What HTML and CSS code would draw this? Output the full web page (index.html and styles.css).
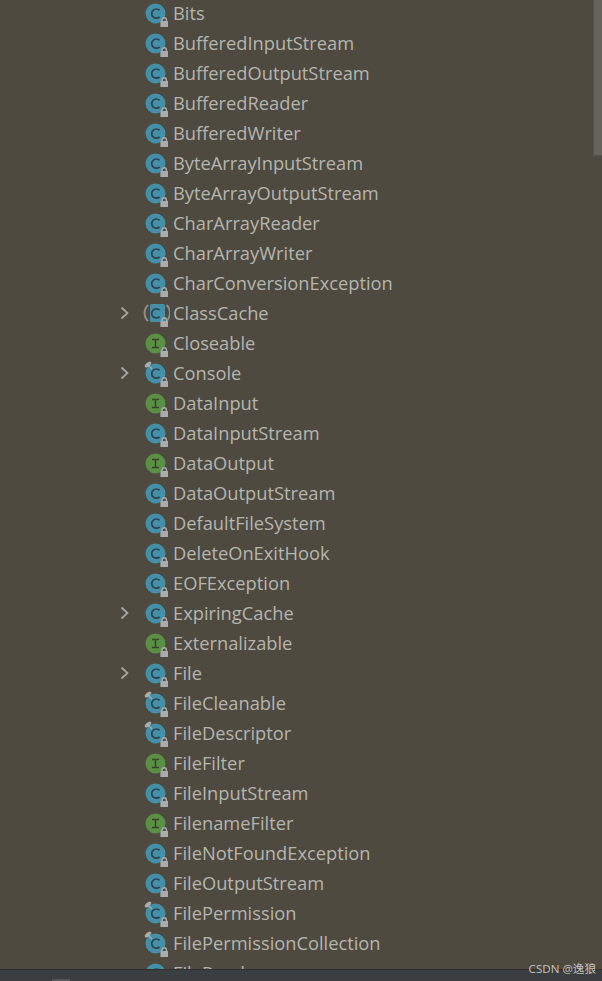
FILE: index.html
```html
<!DOCTYPE html>
<html lang="en">
<head>
<meta charset="utf-8">
<title>Project tree</title>
<link rel="stylesheet" href="styles.css">
</head>
<body>
<svg class="defs" width="0" height="0" aria-hidden="true">
  <symbol id="lock" viewBox="0 0 28 30">
    <path class="shackle" d="M20 23.5v-1.6a2.2 2.2 0 0 1 4.4 0v1.6"/>
    <rect class="lockbody" x="18.4" y="23" width="7.6" height="6"/>
  </symbol>
  <symbol id="c" viewBox="0 0 28 30">
    <circle class="blue" cx="13.5" cy="15.5" r="10"/>
    <path class="glyph" d="M17.6 12.4a4.6 4.6 0 1 0 0 6.4"/>
    <use href="#lock"/>
  </symbol>
  <symbol id="i" viewBox="0 0 28 30">
    <circle class="green" cx="13.5" cy="15.5" r="10"/>
    <path class="glyphi" d="M10 11.5h7M13.5 11.5v8M10 19.5h7"/>
    <use href="#lock"/>
  </symbol>
  <symbol id="p" viewBox="0 0 28 30">
    <circle class="blue" cx="13.5" cy="15.5" r="10"/>
    <path class="glyph" d="M17.6 12.4a4.6 4.6 0 1 0 0 6.4"/>
    <path class="pinline" d="M5 6l5 5"/>
    <ellipse class="pin" cx="6" cy="6.5" rx="3.8" ry="2" transform="rotate(-40 6 6.5)"/>
    <use href="#lock"/>
  </symbol>
  <symbol id="a" viewBox="0 0 28 30">
    <path class="paren" d="M6 7a11 11 0 0 0 0 16M24.5 7a11 11 0 0 1 0 16"/>
    <rect class="blue" x="8" y="6" width="15" height="18" rx="1.5"/>
    <path class="glyph" d="M17.6 12.2a4.6 4.6 0 1 0 0 6.4"/>
    <use href="#lock"/>
  </symbol>
  <symbol id="arrow" viewBox="0 0 12 14">
    <path class="chev" d="M2.5 1.5L8.5 7L2.5 12.5"/>
  </symbol>
</svg>
<div class="screen">
  <ul class="tree">
    <li class="row"><span class="gutter"></span><svg class="icon"><use href="#c"/></svg><span class="name">Bits</span></li>
    <li class="row"><span class="gutter"></span><svg class="icon"><use href="#c"/></svg><span class="name">BufferedInputStream</span></li>
    <li class="row"><span class="gutter"></span><svg class="icon"><use href="#c"/></svg><span class="name">BufferedOutputStream</span></li>
    <li class="row"><span class="gutter"></span><svg class="icon"><use href="#c"/></svg><span class="name">BufferedReader</span></li>
    <li class="row"><span class="gutter"></span><svg class="icon"><use href="#c"/></svg><span class="name">BufferedWriter</span></li>
    <li class="row"><span class="gutter"></span><svg class="icon"><use href="#c"/></svg><span class="name">ByteArrayInputStream</span></li>
    <li class="row"><span class="gutter"></span><svg class="icon"><use href="#c"/></svg><span class="name">ByteArrayOutputStream</span></li>
    <li class="row"><span class="gutter"></span><svg class="icon"><use href="#c"/></svg><span class="name">CharArrayReader</span></li>
    <li class="row"><span class="gutter"></span><svg class="icon"><use href="#c"/></svg><span class="name">CharArrayWriter</span></li>
    <li class="row"><span class="gutter"></span><svg class="icon"><use href="#c"/></svg><span class="name">CharConversionException</span></li>
    <li class="row"><span class="gutter"><svg class="chevron"><use href="#arrow"/></svg></span><svg class="icon"><use href="#a"/></svg><span class="name">ClassCache</span></li>
    <li class="row"><span class="gutter"></span><svg class="icon"><use href="#i"/></svg><span class="name">Closeable</span></li>
    <li class="row"><span class="gutter"><svg class="chevron"><use href="#arrow"/></svg></span><svg class="icon"><use href="#p"/></svg><span class="name">Console</span></li>
    <li class="row"><span class="gutter"></span><svg class="icon"><use href="#i"/></svg><span class="name">DataInput</span></li>
    <li class="row"><span class="gutter"></span><svg class="icon"><use href="#c"/></svg><span class="name">DataInputStream</span></li>
    <li class="row"><span class="gutter"></span><svg class="icon"><use href="#i"/></svg><span class="name">DataOutput</span></li>
    <li class="row"><span class="gutter"></span><svg class="icon"><use href="#c"/></svg><span class="name">DataOutputStream</span></li>
    <li class="row"><span class="gutter"></span><svg class="icon"><use href="#c"/></svg><span class="name">DefaultFileSystem</span></li>
    <li class="row"><span class="gutter"></span><svg class="icon"><use href="#c"/></svg><span class="name">DeleteOnExitHook</span></li>
    <li class="row"><span class="gutter"></span><svg class="icon"><use href="#c"/></svg><span class="name">EOFException</span></li>
    <li class="row"><span class="gutter"><svg class="chevron"><use href="#arrow"/></svg></span><svg class="icon"><use href="#c"/></svg><span class="name">ExpiringCache</span></li>
    <li class="row"><span class="gutter"></span><svg class="icon"><use href="#i"/></svg><span class="name">Externalizable</span></li>
    <li class="row"><span class="gutter"><svg class="chevron"><use href="#arrow"/></svg></span><svg class="icon"><use href="#c"/></svg><span class="name">File</span></li>
    <li class="row"><span class="gutter"></span><svg class="icon"><use href="#p"/></svg><span class="name">FileCleanable</span></li>
    <li class="row"><span class="gutter"></span><svg class="icon"><use href="#p"/></svg><span class="name">FileDescriptor</span></li>
    <li class="row"><span class="gutter"></span><svg class="icon"><use href="#i"/></svg><span class="name">FileFilter</span></li>
    <li class="row"><span class="gutter"></span><svg class="icon"><use href="#c"/></svg><span class="name">FileInputStream</span></li>
    <li class="row"><span class="gutter"></span><svg class="icon"><use href="#i"/></svg><span class="name">FilenameFilter</span></li>
    <li class="row"><span class="gutter"></span><svg class="icon"><use href="#c"/></svg><span class="name">FileNotFoundException</span></li>
    <li class="row"><span class="gutter"></span><svg class="icon"><use href="#c"/></svg><span class="name">FileOutputStream</span></li>
    <li class="row"><span class="gutter"></span><svg class="icon"><use href="#p"/></svg><span class="name">FilePermission</span></li>
    <li class="row"><span class="gutter"></span><svg class="icon"><use href="#p"/></svg><span class="name">FilePermissionCollection</span></li>
    <li class="row"><span class="gutter"></span><svg class="icon"><use href="#c"/></svg><span class="name">FileReader</span></li>
  </ul>
  <div class="scrollbar"></div>
  <footer class="status"><span class="tab"></span></footer>
  <div class="watermark">CSDN @逸狼</div>
</div>
</body>
</html>
```

FILE: styles.css
```css
html, body {
  margin: 0;
  padding: 0;
  height: 100%;
  overflow: hidden;
  background: #4e4a40;
}

.defs {
  display: block;
  height: 0;
}

.screen {
  position: relative;
  display: flex;
  flex-direction: column;
  height: 981px;
  overflow: hidden;
  font-family: "Open Sans", "Noto Sans CJK SC", sans-serif;
}

.tree {
  flex: 1;
  min-height: 0;
  margin: -2px 0 0;
  padding: 0 0 0 118px;
  list-style: none;
  overflow: hidden;
}

.row {
  display: flex;
  align-items: center;
  height: 30px;
}

.gutter {
  display: flex;
  width: 24px;
  height: 30px;
  align-items: center;
}

.chevron {
  width: 12px;
  height: 14px;
  margin-left: 1px;
}

.icon {
  flex: none;
  width: 28px;
  height: 30px;
  margin-right: 3px;
}

.name {
  font-size: 18.3px;
  line-height: 30px;
  color: #b5b5af;
  white-space: nowrap;
}

.blue { fill: #4490a9; }
.green { fill: #5a9044; }
.glyph { fill: none; stroke: #2e4350; stroke-width: 1.7; }
.glyphi { fill: none; stroke: #36422a; stroke-width: 1.5; }
.lockbody { fill: #a9adaf; }
.shackle { fill: none; stroke: #a9adaf; stroke-width: 1.4; }
.pin { fill: #a9adad; }
.pinline { stroke: #a9adad; stroke-width: 1.2; }
.paren { fill: none; stroke: #8e8d86; stroke-width: 2; }
.chev { fill: none; stroke: #a8a7a0; stroke-width: 1.7; }

.scrollbar {
  position: absolute;
  top: 0;
  right: 0;
  width: 8px;
  height: 155px;
  background: #65635c;
  border-left: 1px solid #56534a;
  border-bottom: 1px solid #56534a;
}

.status {
  flex: none;
  height: 11px;
  background: #3b3e40;
  border-top: 1px solid #2f2e2a;
}

.tab {
  display: block;
  width: 18px;
  height: 2px;
  margin: 9px 0 0 52px;
  background: #55585a;
}

.watermark {
  position: absolute;
  right: 6px;
  top: 961px;
  font-size: 11.6px;
  line-height: 16px;
  color: #c4c4c0;
  white-space: nowrap;
}
```
